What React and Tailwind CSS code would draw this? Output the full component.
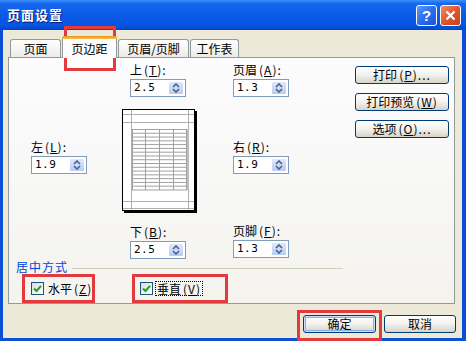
const F = "[font-family:'Noto_Sans_CJK_SC','Noto_Sans',sans-serif]";
const M = "[font-family:'DejaVu_Sans_Mono',monospace]";

function Ul({ c }) {
  return <span className="underline underline-offset-[1px]">{c}</span>;
}

function Acc({ k, tail = "" }) {
  return (
    <span className="ml-[2px] tracking-[1px]">
      (<Ul c={k} />){tail}
    </span>
  );
}

function Label({ t, k }) {
  return (
    <div className="h-[14px] leading-[14px] text-[12px] whitespace-nowrap">
      {t}
      <Acc k={k} tail=":" />
    </div>
  );
}

function Spin({ v }) {
  return (
    <div className="w-[56px] h-[18px] border border-[#7f9db9] bg-white flex">
      <div className={`flex-1 pl-[3px] leading-[16px] text-[11px] tracking-[0.5px] ${M}`}>{v}</div>
      <div className="w-[16px] m-[1px] rounded-[2px] border border-[#fff] bg-gradient-to-b from-[#dfe8fd] to-[#b6cbf6] flex items-center justify-center">
        <svg width="8" height="10" viewBox="0 0 8 10">
          <path d="M1 4 L4 1 L7 4" fill="none" stroke="#4d6185" strokeWidth="1.6" />
          <path d="M1 6 L4 9 L7 6" fill="none" stroke="#4d6185" strokeWidth="1.6" />
        </svg>
      </div>
    </div>
  );
}

function Btn({ children, w = "w-[94px]", focus = false }) {
  return (
    <div
      className={`${w} h-[18px] rounded-[3px] border border-[#003c74] bg-gradient-to-b from-[#ffffff] via-[#f3f2ee] to-[#d8d3c8] flex items-center justify-center text-[12px] leading-[14px] whitespace-nowrap ${
        focus ? "shadow-[inset_0_0_0_1px_#cde0fb,inset_0_0_0_2px_#8aaef0]" : ""
      }`}
    >
      {children}
    </div>
  );
}

function Check({ children, dotted = false }) {
  return (
    <div className="flex items-center">
      <div className="w-[13px] h-[13px] border border-[#1c5180] bg-gradient-to-br from-[#dcdcd7] to-[#ffffff] flex items-center justify-center">
        <svg width="9" height="9" viewBox="0 0 9 9">
          <path d="M1 4.5 L3.5 7 L8 1.8" fill="none" stroke="#21a121" strokeWidth="2" />
        </svg>
      </div>
      <div
        className={`ml-[2px] px-[1px] h-[15px] leading-[13px] text-[12px] whitespace-nowrap ${
          dotted ? "border border-dotted border-black" : "border border-transparent"
        }`}
      >
        {children}
      </div>
    </div>
  );
}

function Page() {
  const rows = [];
  for (let i = 0; i <= 16; i++) {
    const y = 20.5 + i * 3.78;
    rows.push(<line key={"r" + i} x1="10" x2="65" y1={y} y2={y} stroke="#a0a0a0" strokeWidth="1" />);
  }
  const cols = [10.5, 23.5, 37.5, 51.5, 64.5].map((x, i) => (
    <line key={"c" + i} x1={x} x2={x} y1="20" y2="81" stroke="#a0a0a0" strokeWidth="1" />
  ));
  return (
    <svg width="75" height="104" viewBox="0 0 75 104" className="block">
      <rect x="0.5" y="0.5" width="72" height="101" fill="white" stroke="black" />
      <rect x="73" y="2" width="2" height="102" fill="black" />
      <rect x="2" y="102" width="73" height="2" fill="black" />
      <line x1="1" x2="72" y1="5.5" y2="5.5" stroke="#b0b0b0" />
      <line x1="1" x2="72" y1="13.5" y2="13.5" stroke="#b0b0b0" />
      <line x1="1" x2="72" y1="92.5" y2="92.5" stroke="#b0b0b0" />
      <line x1="1" x2="72" y1="99.5" y2="99.5" stroke="#b0b0b0" />
      <line x1="9.5" x2="9.5" y1="1" y2="101" stroke="#b0b0b0" />
      <line x1="66.5" x2="66.5" y1="1" y2="101" stroke="#b0b0b0" />
      {rows}
      {cols}
      <rect x="65" y="20" width="1.5" height="61" fill="#c0c0c0" />
    </svg>
  );
}

function Tab({ children, w, sel = false }) {
  if (sel) {
    return (
      <div className={`${w} h-[22px] -mb-[1px] relative z-10 flex flex-col rounded-t-[3px] border-x border-[#919b9c] bg-[#fcfcfe]`}>
        <div className="h-[3px] -mx-[1px] rounded-t-[3px] bg-gradient-to-b from-[#e68b2c] to-[#ffc73c]" />
        <div className="flex-1 flex items-center justify-center text-[12px] leading-[14px]">{children}</div>
      </div>
    );
  }
  return (
    <div className={`${w} h-[18px] rounded-t-[3px] border-x border-t border-[#919b9c] bg-gradient-to-b from-[#ffffff] to-[#ecebe6] flex items-center justify-center text-[12px] leading-[14px]`}>
      {children}
    </div>
  );
}

function Red({ cls }) {
  return <div className={`absolute border-[3px] border-[#e23a3d] pointer-events-none ${cls}`} />;
}

export default function App() {
  return (
    <div className={`w-[466px] h-[341px] relative overflow-hidden bg-[#0b4fd6] flex flex-col text-black ${F}`}>
      {/* title bar */}
      <div className="h-[30px] shrink-0 flex items-center pl-[7px] pr-[5px] bg-[linear-gradient(to_bottom,#3d8ff7_0%,#1668f0_12%,#0a5ae6_50%,#0555e0_85%,#0046c8_100%)]">
        <span className="text-white font-bold text-[13px] leading-[16px] tracking-[1px] [text-shadow:1px_1px_0_#0a1e78]">页面设置</span>
        <div className="ml-auto flex gap-[3px]">
          <div className="w-[21px] h-[21px] rounded-[3px] border border-white bg-gradient-to-br from-[#5a9bfa] via-[#2a6ef0] to-[#1a55d8] flex items-center justify-center text-white font-bold text-[15px] leading-none [font-family:'Liberation_Sans',sans-serif]">
            ?
          </div>
          <div className="w-[21px] h-[21px] rounded-[3px] border border-white bg-gradient-to-br from-[#f08a64] via-[#e2552c] to-[#c8401c] flex items-center justify-center">
            <svg width="11" height="11" viewBox="0 0 11 11">
              <path d="M1.5 1.5 L9.5 9.5 M9.5 1.5 L1.5 9.5" stroke="white" strokeWidth="2.2" />
            </svg>
          </div>
        </div>
      </div>

      {/* body */}
      <div className="flex-1 ml-[3px] mr-[4px] mb-[3px] bg-[#ece9d8] flex flex-col">
        {/* tabs */}
        <div className="h-[21px] mt-[6px] ml-[7px] flex items-end gap-[1px]">
          <Tab w="w-[51px]">页面</Tab>
          <Tab w="w-[55px]" sel>
            页边距
          </Tab>
          <Tab w="w-[71px]">页眉/页脚</Tab>
          <Tab w="w-[49px]">工作表</Tab>
        </div>

        {/* panel */}
        <div className="ml-[5px] w-[447px] h-[247px] border border-[#919b9c] bg-gradient-to-b from-[#fcfcfe] to-[#f4f3ee] flex flex-col">
          <div className="h-[200px] flex">
            <div className="w-[113px] pl-[22px] pt-[82px] flex flex-col">
              <Label t="左" k="L" />
              <div className="mt-[2px]">
                <Spin v="1.9" />
              </div>
            </div>
            <div className="w-[111px] flex flex-col">
              <div className="ml-[8px] mt-[5px]">
                <Label t="上" k="T" />
                <div className="mt-[2px]">
                  <Spin v="2.5" />
                </div>
              </div>
              <div className="mt-[12px]">
                <Page />
              </div>
              <div className="ml-[8px] mt-[12px]">
                <Label t="下" k="B" />
                <div className="mt-[2px]">
                  <Spin v="2.5" />
                </div>
              </div>
            </div>
            <div className="w-[122px] flex flex-col">
              <div className="mt-[5px]">
                <Label t="页眉" k="A" />
                <div className="mt-[2px]">
                  <Spin v="1.3" />
                </div>
              </div>
              <div className="mt-[43px]">
                <Label t="右" k="R" />
                <div className="mt-[2px]">
                  <Spin v="1.9" />
                </div>
              </div>
              <div className="mt-[50px]">
                <Label t="页脚" k="F" />
                <div className="mt-[2px]">
                  <Spin v="1.3" />
                </div>
              </div>
            </div>
            <div className="w-[94px] pt-[8px] flex flex-col gap-[9px]">
              <Btn>
                打印<Acc k="P" tail="..." />
              </Btn>
              <Btn>
                打印预览<Acc k="W" />
              </Btn>
              <Btn>
                选项<Acc k="O" tail="..." />
              </Btn>
            </div>
          </div>

          {/* group box */}
          <div className="ml-[7px] w-[327px] mt-[2px] flex items-center h-[14px]">
            <span className="text-[12px] leading-[14px] text-[#0046d5] tracking-[1px]">居中方式</span>
            <div className="flex-1 ml-[4px] mt-[3px] h-px bg-[#d0d0bf]" />
          </div>
          <div className="mt-[7px] flex">
            <div className="ml-[22px] w-[109px]">
              <Check>
                水平<Acc k="Z" />
              </Check>
            </div>
            <Check dotted>
              垂直<Acc k="V" />
            </Check>
          </div>
        </div>

        {/* bottom buttons */}
        <div className="mt-[11px] flex justify-end pr-[6px] gap-[8px]">
          <Btn w="w-[73px]" focus>
            确定
          </Btn>
          <Btn w="w-[72px]">取消</Btn>
        </div>
      </div>

      <Red cls="left-[64px] top-[26px] w-[52px] h-[45px]" />
      <Red cls="left-[22px] top-[274px] w-[73px] h-[29px]" />
      <Red cls="left-[132px] top-[274px] w-[96px] h-[29px]" />
      <Red cls="left-[297px] top-[310px] w-[85px] h-[31px]" />
    </div>
  );
}
